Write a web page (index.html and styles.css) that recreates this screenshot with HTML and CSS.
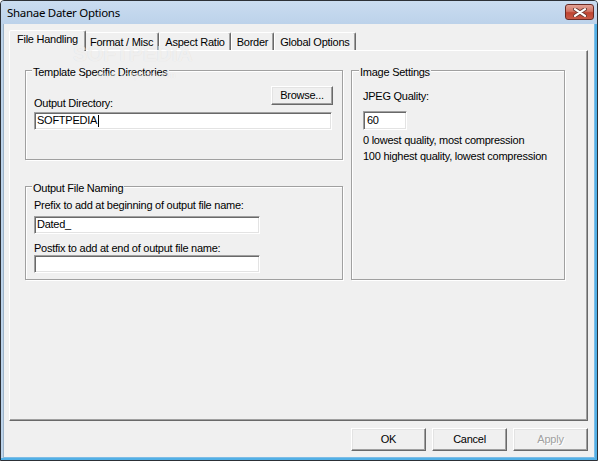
FILE: index.html
```html
<!DOCTYPE html>
<html>
<head>
<meta charset="utf-8">
<title>Shanae Dater Options</title>
<link rel="stylesheet" href="styles.css">
</head>
<body>
<div class="window">
  <div class="titlebar">
    <span class="title">Shanae Dater Options</span>
    <div class="close" aria-label="Close">
      <svg width="14" height="9" viewBox="0 0 14 9">
        <path d="M2 1.2 L12 7.8 M12 1.2 L2 7.8" stroke="#6b3a34" stroke-width="4" stroke-linecap="round" fill="none"/>
        <path d="M2 1.2 L12 7.8 M12 1.2 L2 7.8" stroke="#ffffff" stroke-width="2.2" stroke-linecap="round" fill="none"/>
      </svg>
    </div>
  </div>
  <div class="client">
    <div class="tab-strip">
      <div class="tab active">File Handling</div>
      <div class="tab">Format / Misc</div>
      <div class="tab">Aspect Ratio</div>
      <div class="tab">Border</div>
      <div class="tab">Global Options</div>
    </div>
    <div class="panel">
      <div class="col-left">
        <div class="group g-template">
          <span class="group-title">Template Specific Directories</span>
          <div class="label-row">
            <span class="label">Output Directory:</span>
            <button class="btn btn-browse">Browse...</button>
          </div>
          <div class="textbox tb-dir">SOFTPEDIA<span class="caret"></span></div>
        </div>
        <div class="group g-naming">
          <span class="group-title">Output File Naming</span>
          <div class="label">Prefix to add at beginning of output file name:</div>
          <div class="textbox tb-prefix">Dated_</div>
          <div class="label lbl-postfix">Postfix to add at end of output file name:</div>
          <div class="textbox tb-postfix"></div>
        </div>
      </div>
      <div class="group g-image">
        <span class="group-title">Image Settings</span>
        <div class="label">JPEG Quality:</div>
        <div class="textbox tb-quality">60</div>
        <div class="label hint">0 lowest quality, most compression</div>
        <div class="label hint hint2">100 highest quality, lowest compression</div>
      </div>
    </div>
    <div class="dialog-buttons">
      <button class="btn btn-lg">OK</button>
      <button class="btn btn-lg">Cancel</button>
      <button class="btn btn-lg disabled">Apply</button>
    </div>
  </div>
  <div class="watermark">
    <div class="wm-big">SOFTPEDIA</div>
    <div class="wm-small">www.softpedia.com</div>
  </div>
</div>
</body>
</html>
```
FILE: styles.css
```css
* { box-sizing: border-box; margin: 0; padding: 0; }
html, body { width: 598px; height: 461px; overflow: hidden; }
body {
  font-family: "Liberation Sans", Arial, sans-serif;
  font-size: 11px;
  letter-spacing: -0.25px;
  color: #000;
  background: #ffffff;
}
.window {
  position: relative;
  width: 598px;
  height: 461px;
  border: 1px solid #2c3036;
  border-radius: 4px 4px 0 0;
  background: #bcd3ea;
  box-shadow: inset -2px -2px 0 #52b0e6;
  display: flex;
  flex-direction: column;
}
.titlebar {
  height: 23px;
  flex: none;
  display: flex;
  justify-content: space-between;
  align-items: flex-start;
  padding: 0 3px 0 6px;
  background: linear-gradient(#cadcf0, #bcd2ea);
  border-radius: 3px 3px 0 0;
}
.title {
  font-family: "Noto Sans", "Liberation Sans", sans-serif;
  font-size: 11.5px;
  letter-spacing: -0.3px;
  line-height: 23px;
  color: #000;
}
.close {
  margin-top: 3px;
  width: 29px;
  height: 16px;
  border: 1px solid #6a2a24;
  border-radius: 3px;
  background: linear-gradient(#e2a296 0, #d27565 45%, #bf4431 55%, #c85a48 100%);
  display: flex;
  align-items: center;
  justify-content: center;
}
.close svg { display: block; }
.client {
  flex: 1;
  margin: 0 2px 2px;
  border: 1px solid;
  border-top: none;
  border-color: #9db3c8 #7ebde6 #7ebde6 #9db3c8;
  background: #f0f0f0;
  padding: 6px 6px 6px 5px;
  display: flex;
  flex-direction: column;
}
.tab-strip {
  flex: none;
  height: 20px;
  display: flex;
  align-items: flex-end;
  padding-left: 2px;
}
.tab {
  height: 18px;
  padding: 3px 5px 0;
  line-height: 13px;
  white-space: nowrap;
  background: #f0f0f0;
  border: 1px solid;
  border-bottom: none;
  border-color: #ffffff #696969 transparent #ffffff;
  box-shadow: inset -1px 0 0 #a0a0a0;
  border-radius: 2px 2px 0 0;
}
.tab.active {
  position: relative;
  z-index: 1;
  height: 21px;
  padding: 2px 7px 0;
  margin: 0 -2px -1px -2px;
}
.panel {
  flex: none;
  height: 371px;
  border: 1px solid;
  border-color: #ffffff #696969 #696969 #ffffff;
  box-shadow: inset -1px -1px 0 #a0a0a0;
  padding: 19px 0 0 15px;
  display: flex;
  align-items: flex-start;
  gap: 8px;
}
.col-left {
  display: flex;
  flex-direction: column;
  gap: 26px;
}
.group {
  position: relative;
  border: 1px solid #a0a0a0;
  box-shadow: 1px 1px 0 #ffffff, inset 1px 1px 0 #ffffff;
}
.group-title {
  position: absolute;
  top: -5px;
  left: 6px;
  padding: 0 1px;
  line-height: 13px;
  background: #f0f0f0;
  white-space: nowrap;
}
.g-template {
  width: 318px;
  height: 90px;
  padding: 15px 9px 0 8px;
}
.g-naming {
  width: 318px;
  height: 94px;
  padding: 12px 9px 0 8px;
}
.g-image {
  width: 214px;
  height: 210px;
  padding: 19px 9px 0 11px;
}
.g-image .group-title { left: 7px; }
.label {
  line-height: 13px;
  white-space: nowrap;
}
.label-row {
  display: flex;
  justify-content: space-between;
  align-items: flex-end;
}
.label-row .label { margin-bottom: -5px; }
.btn {
  appearance: none;
  font: inherit;
  letter-spacing: inherit;
  line-height: 13px;
  color: #000;
  background: #f0f0f0;
  border: 1px solid;
  border-color: #ffffff #696969 #696969 #ffffff;
  box-shadow: inset -1px -1px 0 #a0a0a0, inset 1px 1px 0 #e3e3e3;
  display: flex;
  align-items: center;
  justify-content: center;
  padding: 0;
}
.btn-browse { width: 62px; height: 19px; }
.textbox {
  height: 18px;
  border: 1px solid;
  border-color: #a0a0a0 #ffffff #ffffff #a0a0a0;
  box-shadow: inset 1px 1px 0 #696969, inset -1px -1px 0 #e3e3e3;
  background: #ffffff;
  padding: 1px 2px 0 2px;
  line-height: 13px;
  white-space: nowrap;
}
.caret {
  display: inline-block;
  width: 1px;
  height: 12px;
  background: #000;
  vertical-align: top;
  margin-top: 1px;
  margin-left: 1px;
}
.tb-dir { width: 298px; margin-top: 7px; }
.tb-prefix { width: 226px; margin-top: 4px; }
.lbl-postfix { margin-top: 8px; }
.tb-postfix { width: 226px; margin-top: 0; }
.tb-quality { width: 44px; height: 19px; margin-top: 8px; padding-left: 3px; padding-top: 2px; }
.hint { margin-top: 4px; }
.hint2 { margin-top: 3px; }
.dialog-buttons {
  flex: none;
  display: flex;
  justify-content: flex-end;
  gap: 6px;
  margin-top: 7px;
}
.btn-lg { width: 75px; height: 23px; }
.btn.disabled { color: #a0a0a0; text-shadow: 1px 1px 0 #ffffff; }
.watermark {
  position: absolute;
  left: 72px;
  top: 43px;
  z-index: 5;
  pointer-events: none;
  width: 122px;
}
.wm-big {
  font-family: "Liberation Sans", sans-serif;
  font-weight: bold;
  font-size: 22px;
  line-height: 20px;
  letter-spacing: 0;
  transform: scaleX(0.95);
  transform-origin: left center;
  white-space: nowrap;
  color: rgba(255, 255, 255, 0.6);
  text-shadow: 0 0 1px rgba(0, 0, 0, 0.1);
}
.wm-small {
  font-size: 9px;
  line-height: 10px;
  letter-spacing: 0;
  margin: 6px 0 0 25px;
  white-space: nowrap;
  color: rgba(255, 255, 255, 0.7);
  text-shadow: 0 0 1px rgba(0, 0, 0, 0.1);
}
```
